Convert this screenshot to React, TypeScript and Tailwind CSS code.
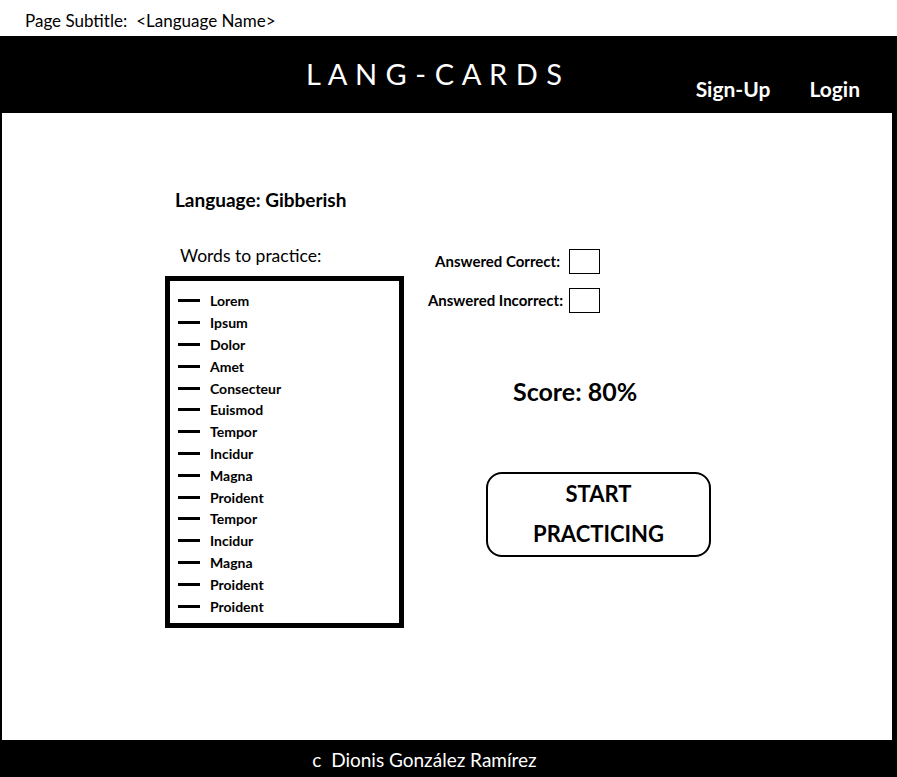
import React from 'react';

const words = [
  'Lorem', 'Ipsum', 'Dolor', 'Amet', 'Consecteur', 'Euismod', 'Tempor', 'Incidur',
  'Magna', 'Proident', 'Tempor', 'Incidur', 'Magna', 'Proident', 'Proident',
];

export default function App() {
  return (
    <div className="w-[897px] h-[777px] flex flex-col bg-white text-black font-['Lato',sans-serif]">
      {/* page subtitle strip */}
      <div className="h-[36px] flex items-center pt-[5px] pl-[25px] text-[17px]">
        <span>Page Subtitle:</span>
        <span className="ml-[9px]">&lt;Language Name&gt;</span>
      </div>

      <div className="flex-1 flex flex-col bg-black">
        {/* header */}
        <header className="h-[77px] flex text-white">
          <h1 className="ml-[306px] mt-[20px] text-[29px] leading-[36px] tracking-[0.02em] font-normal whitespace-pre">
            L A N G - C A R D S
          </h1>
          <nav className="ml-auto mr-[37px] mt-[39px] flex gap-[39px] text-[21px] font-bold leading-[28px]">
            <span>Sign-Up</span>
            <span>Login</span>
          </nav>
        </header>

        {/* main content */}
        <main className="flex-1 ml-[2px] mr-[5px] bg-white pl-[163px] pt-[75px]">
          <h2 className="ml-[10px] text-[19px] font-bold leading-[24px]">Language: Gibberish</h2>

          <div className="flex mt-[32px]">
            <div className="w-[239px] flex flex-col">
              <p className="ml-[15px] text-[17.5px] leading-[24px]">Words to practice:</p>
              <div className="mt-[8px] h-[352px] border-[5px] border-black pt-[9px] pl-[8px]">
                <ul className="flex flex-col">
                  {words.map((w, i) => (
                    <li key={i} className="h-[21.8px] flex items-center">
                      <span className="w-[22px] h-[3px] bg-black"></span>
                      <span className="ml-[10px] text-[14px] font-bold">{w}</span>
                    </li>
                  ))}
                </ul>
              </div>
            </div>

            <div className="flex flex-col">
              <div className="w-[196px] mt-[5px] flex justify-end items-center gap-[9px]">
                <span className="text-[15px] font-bold">Answered Correct:</span>
                <span className="w-[31px] h-[25px] border border-black"></span>
              </div>
              <div className="w-[196px] mt-[14px] flex justify-end items-center gap-[6px]">
                <span className="text-[15px] font-bold">Answered Incorrect:</span>
                <span className="w-[31px] h-[25px] border border-black"></span>
              </div>

              <p className="ml-[109px] mt-[62px] text-[25px] font-bold leading-[32px]">Score: 80%</p>

              <button className="ml-[82px] mt-[65px] w-[225px] h-[85px] border-2 border-black rounded-[16px] text-[22px] font-bold leading-[40px] flex flex-col items-center">
                <span>START</span>
                <span>PRACTICING</span>
              </button>
            </div>
          </div>
        </main>

        {/* footer */}
        <footer className="h-[37px] flex items-center justify-center pt-[4px] pr-[48px] text-white text-[19px]">
          c&nbsp;&nbsp;Dionis González Ramírez
        </footer>
      </div>
    </div>
  );
}
